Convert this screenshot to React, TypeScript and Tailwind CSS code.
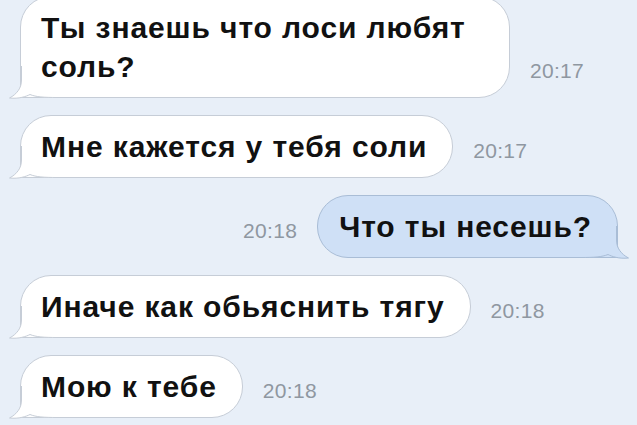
import React from 'react'

type Msg = { text: string; time: string; out?: boolean; first?: boolean }

const messages: Msg[] = [
  { text: 'Ты знаешь что лоси любят соль?', time: '20:17', first: true },
  { text: 'Мне кажется у тебя соли', time: '20:17' },
  { text: 'Что ты несешь?', time: '20:18', out: true },
  { text: 'Иначе как обьяснить тягу', time: '20:18' },
  { text: 'Мою к тебе', time: '20:18' },
]

function Tail({ out }: { out?: boolean }) {
  const fill = out ? '#cfe0f6' : '#ffffff'
  const stroke = out ? '#a9bdd6' : '#c6cdd7'
  return (
    <svg
      width="48"
      height="34"
      viewBox="0 0 48 34"
      className={
        out
          ? 'absolute right-[-12px] bottom-[-3px] -scale-x-100'
          : 'absolute left-[-12px] bottom-[-3px]'
      }
    >
      <path
        d="M12.5 0 L12.5 14 C12.5 22 8 28 0.5 32 C10 33 17 30.5 21 28.5 C27 31 35 31.5 48 31.5 L48 0 Z"
        fill={fill}
      />
      <path
        d="M12.5 0 L12.5 14 C12.5 22 8 28 0.5 32 C10 33 17 30.5 21 28.5 C27 31 35 31.5 48 31.5"
        fill="none"
        stroke={stroke}
        strokeWidth="1"
      />
    </svg>
  )
}

function Bubble({ msg }: { msg: Msg }) {
  return (
    <div
      className={
        'relative max-w-[490px] rounded-[31px] border px-[20px] py-[11px] ' +
        (msg.out
          ? 'rounded-br-none border-[#a9bdd6] bg-[#cfe0f6] pr-[25px] pl-[21px]'
          : 'rounded-bl-none border-[#c6cdd7] bg-white pr-[25px]')
      }
    >
      <Tail out={msg.out} />
      <span className="relative text-[30px] leading-[39px] font-bold tracking-[0.9px] text-[#111111] [font-family:'Liberation_Sans',Arial,sans-serif]">
        {msg.text}
      </span>
    </div>
  )
}

function Time({ value }: { value: string }) {
  return (
    <span className="mb-[15px] shrink-0 text-[21px] leading-[24px] tracking-[0.3px] text-[#8f97a1] [font-family:'Liberation_Sans',Arial,sans-serif]">
      {value}
    </span>
  )
}

export default function App() {
  return (
    <div className="h-[425px] w-[637px] overflow-hidden bg-[#e8eff8]">
      <div className="flex flex-col gap-[17px] pl-[20px] pr-[19px]">
        {messages.map((m, i) => (
          <div
            key={i}
            className={
              'flex items-end gap-[20px] ' +
              (m.out ? 'justify-end' : 'justify-start') +
              (m.first ? ' mt-[-4px]' : '')
            }
          >
            {m.out && <Time value={m.time} />}
            <Bubble msg={m} />
            {!m.out && <Time value={m.time} />}
          </div>
        ))}
      </div>
    </div>
  )
}
